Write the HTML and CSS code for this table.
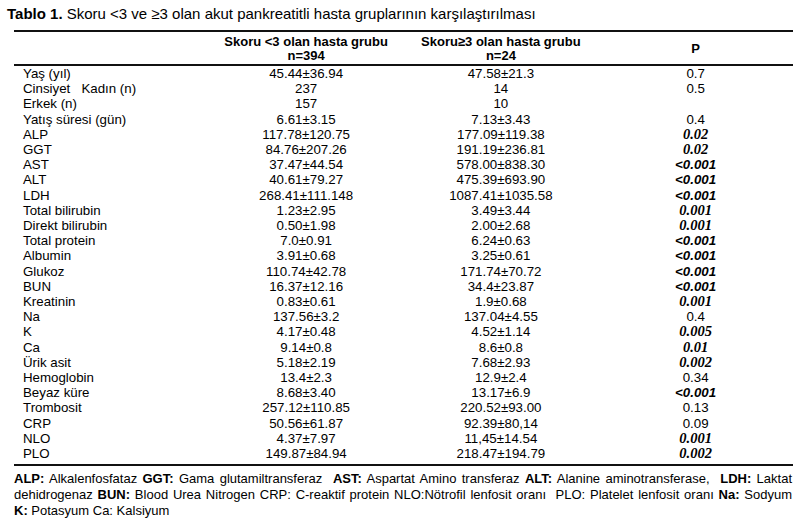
FILE: index.html
```html
<!DOCTYPE html>
<html lang="tr">
<head>
    <meta charset="UTF-8">
    <title>Tablo 1</title>
    <link rel="stylesheet" href="styles.css">
</head>
<body>
    <p class="title"><b>Tablo 1.</b> Skoru &lt;3 ve ≥3 olan akut pankreatitli hasta gruplarının karşılaştırılması</p>

    <table class="data">
        <colgroup>
            <col class="c-label"><col><col><col>
        </colgroup>
        <thead>
            <tr>
                <th></th>
                <th>Skoru &lt;3 olan hasta grubu<br>n=394</th>
                <th>Skoru≥3 olan hasta grubu<br>n=24</th>
                <th>P</th>
            </tr>
        </thead>
        <tbody>
            <tr><td>Yaş (yıl)</td><td>45.44±36.94</td><td>47.58±21.3</td><td>0.7</td></tr>
            <tr><td>Cinsiyet &nbsp; Kadın (n)</td><td>237</td><td>14</td><td>0.5</td></tr>
            <tr><td>Erkek (n)</td><td>157</td><td>10</td><td></td></tr>
            <tr><td>Yatış süresi (gün)</td><td>6.61±3.15</td><td>7.13±3.43</td><td>0.4</td></tr>
            <tr><td>ALP</td><td>117.78±120.75</td><td>177.09±119.38</td><td class="sig">0.02</td></tr>
            <tr><td>GGT</td><td>84.76±207.26</td><td>191.19±236.81</td><td class="sig">0.02</td></tr>
            <tr><td>AST</td><td>37.47±44.54</td><td>578.00±838.30</td><td class="sig lt">&lt;0.001</td></tr>
            <tr><td>ALT</td><td>40.61±79.27</td><td>475.39±693.90</td><td class="sig lt">&lt;0.001</td></tr>
            <tr><td>LDH</td><td>268.41±111.148</td><td>1087.41±1035.58</td><td class="sig lt">&lt;0.001</td></tr>
            <tr><td>Total bilirubin</td><td>1.23±2.95</td><td>3.49±3.44</td><td class="sig">0.001</td></tr>
            <tr><td>Direkt bilirubin</td><td>0.50±1.98</td><td>2.00±2.68</td><td class="sig">0.001</td></tr>
            <tr><td>Total protein</td><td>7.0±0.91</td><td>6.24±0.63</td><td class="sig lt">&lt;0.001</td></tr>
            <tr><td>Albumin</td><td>3.91±0.68</td><td>3.25±0.61</td><td class="sig lt">&lt;0.001</td></tr>
            <tr><td>Glukoz</td><td>110.74±42.78</td><td>171.74±70.72</td><td class="sig lt">&lt;0.001</td></tr>
            <tr><td>BUN</td><td>16.37±12.16</td><td>34.4±23.87</td><td class="sig lt">&lt;0.001</td></tr>
            <tr><td>Kreatinin</td><td>0.83±0.61</td><td>1.9±0.68</td><td class="sig">0.001</td></tr>
            <tr><td>Na</td><td>137.56±3.2</td><td>137.04±4.55</td><td>0.4</td></tr>
            <tr><td>K</td><td>4.17±0.48</td><td>4.52±1.14</td><td class="sig">0.005</td></tr>
            <tr><td>Ca</td><td>9.14±0.8</td><td>8.6±0.8</td><td class="sig">0.01</td></tr>
            <tr><td>Ürik asit</td><td>5.18±2.19</td><td>7.68±2.93</td><td class="sig">0.002</td></tr>
            <tr><td>Hemoglobin</td><td>13.4±2.3</td><td>12.9±2.4</td><td>0.34</td></tr>
            <tr><td>Beyaz küre</td><td>8.68±3.40</td><td>13.17±6.9</td><td class="sig lt">&lt;0.001</td></tr>
            <tr><td>Trombosit</td><td>257.12±110.85</td><td>220.52±93.00</td><td>0.13</td></tr>
            <tr><td>CRP</td><td>50.56±61.87</td><td>92.39±80,14</td><td>0.09</td></tr>
            <tr><td>NLO</td><td>4.37±7.97</td><td>11,45±14.54</td><td class="sig">0.001</td></tr>
            <tr class="last"><td>PLO</td><td>149.87±84.94</td><td>218.47±194.79</td><td class="sig">0.002</td></tr>
        </tbody>
    </table>

    <div class="notes">
        <span class="line"><b>ALP:</b> Alkalenfosfataz <b>GGT:</b> Gama glutamiltransferaz &nbsp;<b>AST:</b> Aspartat Amino transferaz <b>ALT:</b> Alanine aminotransferase, &nbsp;<b>LDH:</b> Laktat</span>
        <span class="line">dehidrogenaz <b>BUN:</b> Blood Urea Nitrogen CRP: C-reaktif protein NLO:Nötrofil lenfosit oranı &nbsp;PLO: Platelet lenfosit oranı <b>Na:</b> Sodyum</span>
        <span class="line last-line"><b>K:</b> Potasyum Ca: Kalsiyum</span>
    </div>
</body>
</html>
```

FILE: styles.css
```css
body {
    margin: 0;
    background-color: #fff;
    color: #000;
    font-family: "Liberation Sans", Arial, sans-serif;
}

.title {
    margin: 0;
    padding: 6px 0 0 7px;
    font-size: 15px;
    line-height: 16px;
}

.data {
    margin: 8px 0 0 14px;
    width: 779px;
    border-collapse: collapse;
    table-layout: fixed;
    font-size: 13.3px;
}

.data thead tr {
    border-top: 2px solid #111;
    border-bottom: 2px solid #111;
}

.data th {
    padding: 3px 0 1px;
    font-size: 13px;
    line-height: 14px;
    font-weight: bold;
    text-align: center;
}

.data td {
    padding: 0;
    line-height: 15.2px;
    height: 15.2px;
    text-align: center;
    white-space: nowrap;
}

.data td:first-child {
    text-align: left;
    padding-left: 9px;
}

.data tbody tr.last td {
    padding-bottom: 3px;
}

.data tbody tr.last {
    border-bottom: 2px solid #111;
}

.sig {
    font-family: "Liberation Serif", "Times New Roman", serif;
    font-size: 14.5px;
    font-weight: bold;
    font-style: italic;
}

.sig.lt {
    font-family: "Liberation Sans", Arial, sans-serif;
    font-size: 13.3px;
}

.notes {
    width: 778px;
    margin: 5px 0 0 14px;
    font-size: 13px;
    line-height: 16px;
}

.notes .line {
    display: block;
    text-align: justify;
    text-align-last: justify;
}

.notes .last-line {
    text-align-last: left;
}
```
